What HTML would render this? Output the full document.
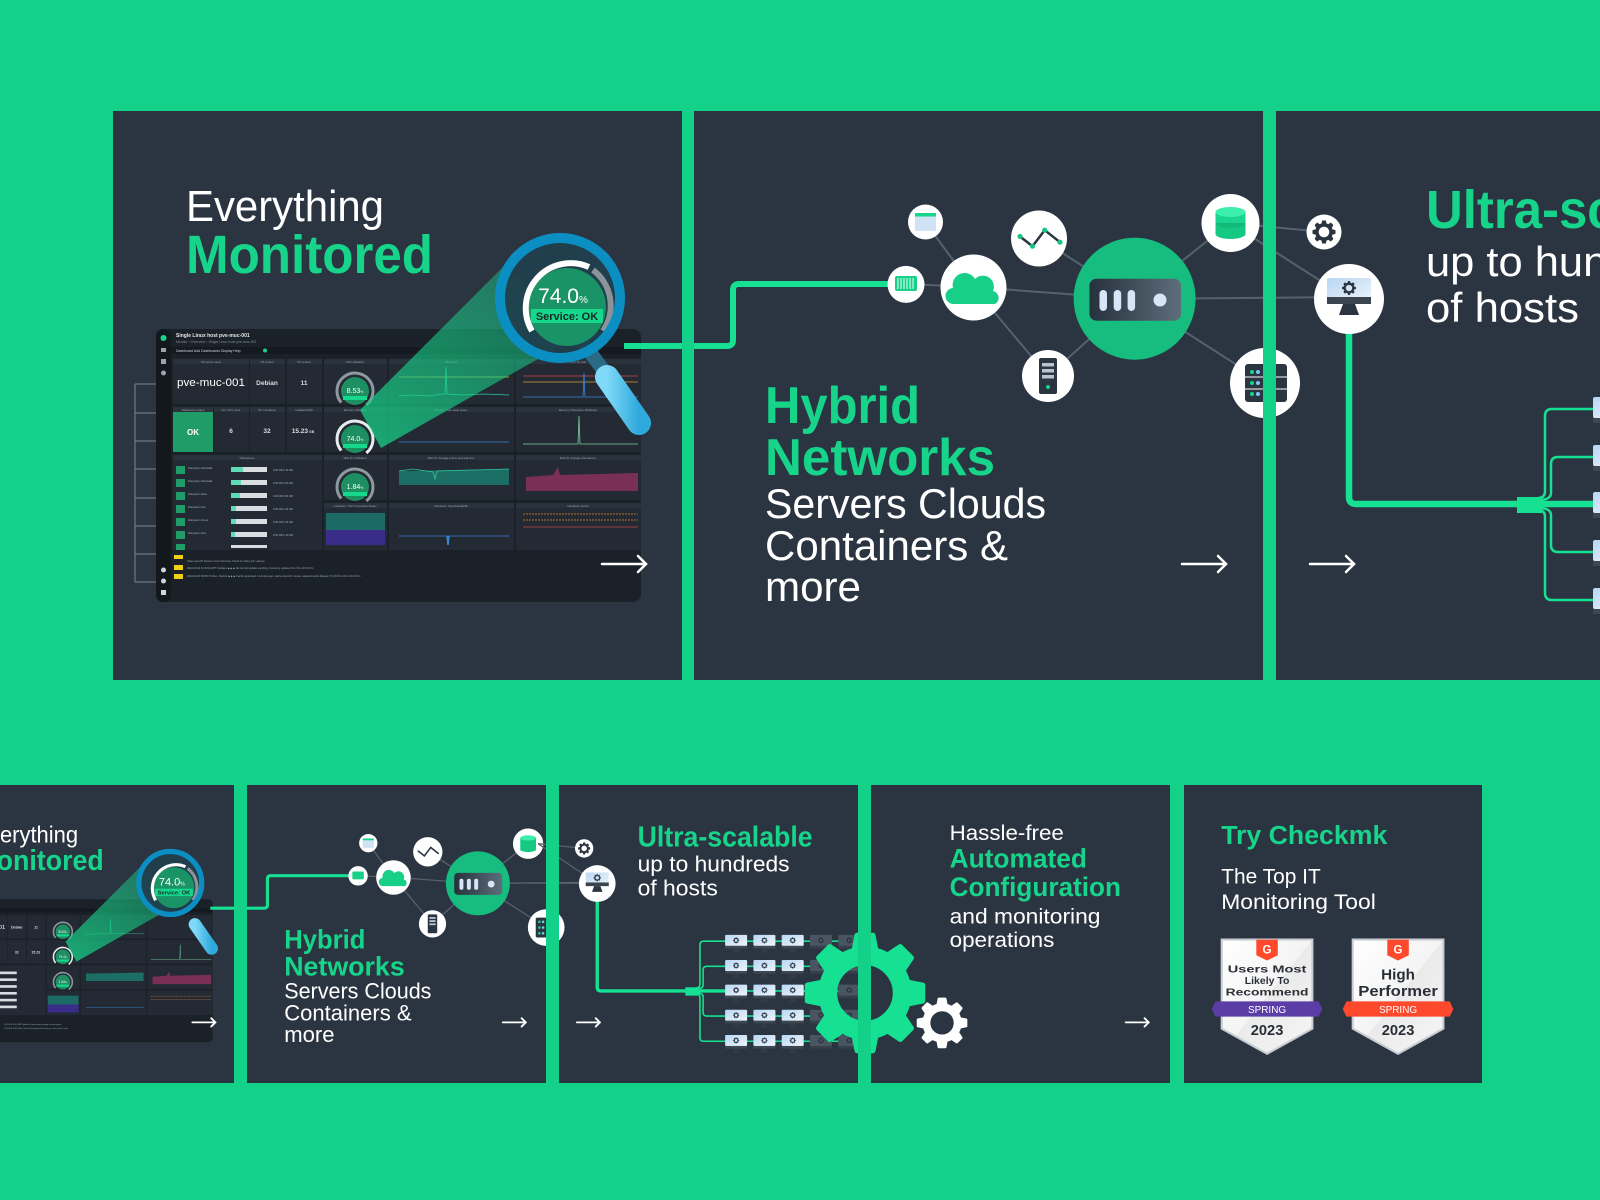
<!DOCTYPE html>
<html><head><meta charset="utf-8">
<style>
html,body{margin:0;padding:0;}
body{width:1600px;height:1200px;overflow:hidden;background:#14d18a;position:relative;font-family:"Liberation Sans",sans-serif;}
.bg{position:absolute;background:#2b3541;}
.pc{position:absolute;width:569px;height:569px;}
.pc svg{position:absolute;left:0;top:0;overflow:visible;}
.sm{transform:scale(0.524);transform-origin:0 0;}
.st{position:absolute;background:#14d18a;}
</style></head><body>
<svg width="0" height="0" style="position:absolute">
<defs>
<linearGradient id="cone" x1="0" y1="1" x2="1" y2="0"><stop offset="0" stop-color="#17d48b" stop-opacity="0.75"/><stop offset="1" stop-color="#17d48b" stop-opacity="0.35"/></linearGradient>
<linearGradient id="srv" x1="0" y1="0" x2="1" y2="0"><stop offset="0" stop-color="#26313c"/><stop offset="1" stop-color="#5d6e7b"/></linearGradient>
<linearGradient id="scr" x1="0" y1="0" x2="1" y2="1"><stop offset="0" stop-color="#b8d6f2"/><stop offset="1" stop-color="#eef5fc"/></linearGradient>
<linearGradient id="hdl" x1="0" y1="0" x2="1" y2="0"><stop offset="0" stop-color="#7fd9f8"/><stop offset="1" stop-color="#2fa9dc"/></linearGradient>
<linearGradient id="bdg" x1="0" y1="0" x2="1" y2="1"><stop offset="0" stop-color="#ffffff"/><stop offset="0.5" stop-color="#f4f4f4"/><stop offset="0.5" stop-color="#eaeaea"/><stop offset="1" stop-color="#f6f6f6"/></linearGradient>
<polygon id="tooth" points="-15,-110 15,-110 21,-80 -21,-80" stroke="currentColor" stroke-width="10" stroke-linejoin="round"/>
<g id="gear"><circle r="71" fill="none" stroke="currentColor" stroke-width="36"/>
<g fill="currentColor"><use href="#tooth"/><use href="#tooth" transform="rotate(45)"/><use href="#tooth" transform="rotate(90)"/><use href="#tooth" transform="rotate(135)"/><use href="#tooth" transform="rotate(180)"/><use href="#tooth" transform="rotate(225)"/><use href="#tooth" transform="rotate(270)"/><use href="#tooth" transform="rotate(315)"/></g></g>
<g id="host"><rect x="0" y="-12" width="42" height="21" rx="2" fill="url(#scr)"/><rect x="0" y="9" width="42" height="5" fill="#3c4752"/><polygon points="16,14 26,14 28,22 14,22" fill="#36414c" opacity="0.6"/><use href="#gear" transform="translate(21,-1.5) scale(0.05)" style="color:#2b3541"/></g>
<g id="hostd"><rect x="0" y="-12" width="42" height="21" rx="2" fill="#4a5562"/><rect x="0" y="9" width="42" height="5" fill="#36404b"/><use href="#gear" transform="translate(21,-1.5) scale(0.05)" style="color:#2b3541"/></g>
</defs></svg>

<!-- backgrounds -->
<div class="bg" style="left:113px;top:111px;width:569px;height:569px"></div>
<div class="bg" style="left:694px;top:111px;width:569px;height:569px"></div>
<div class="bg" style="left:1276px;top:111px;width:324px;height:569px"></div>
<div class="bg" style="left:0;top:785px;width:234px;height:298px"></div>
<div class="bg" style="left:247px;top:785px;width:299px;height:298px"></div>
<div class="bg" style="left:559px;top:785px;width:299px;height:298px"></div>
<div class="bg" style="left:871px;top:785px;width:299px;height:298px"></div>
<div class="bg" style="left:1184px;top:785px;width:298px;height:298px"></div>

<!-- PANEL 1 TOP -->
<div class="pc" style="left:113px;top:111px"><svg width="569" height="569">
<g stroke="#7d8893" stroke-width="1"><line x1="22" y1="273" x2="22" y2="471"/><line x1="22" y1="273" x2="43" y2="273"/><line x1="22" y1="302" x2="43" y2="302"/><line x1="22" y1="330" x2="43" y2="330"/><line x1="22" y1="358" x2="43" y2="358"/><line x1="22" y1="387" x2="43" y2="387"/><line x1="22" y1="415" x2="43" y2="415"/><line x1="22" y1="443" x2="43" y2="443"/><line x1="22" y1="471" x2="43" y2="471"/></g>
<text x="73" y="110" font-size="44" fill="#fff" textLength="198" lengthAdjust="spacingAndGlyphs">Everything</text>
<text x="73" y="162" font-size="54" font-weight="700" fill="#17d48b" textLength="247" lengthAdjust="spacingAndGlyphs">Monitored</text>
<rect x="43" y="218" width="485" height="273" rx="8" fill="#1b2128"/>
<rect x="43" y="218" width="15" height="273" rx="7" fill="#13181d"/>
<circle cx="50.5" cy="227" r="3" fill="#17d48b"/><rect x="48" y="237" width="5" height="4" fill="#9aa4ae"/><rect x="48" y="248" width="5" height="5" fill="#9aa4ae"/><circle cx="50.5" cy="262" r="2.5" fill="#9aa4ae"/><circle cx="50.5" cy="459" r="2.5" fill="#cfd6dc"/><circle cx="50.5" cy="470" r="2.5" fill="#cfd6dc"/><rect x="48" y="479" width="5" height="5" fill="#cfd6dc"/>
<text x="63" y="226" font-size="5" font-weight="700" fill="#e6e9ec">Single Linux host pve-muc-001</text>
<text x="63" y="232" font-size="3.5" fill="#7f8a95">Monitor › Overview › Single Linux host pve-muc-001</text>
<rect x="58" y="236" width="470" height="7" fill="#151a20"/>
<text x="63" y="241" font-size="3.5" fill="#d0d5da">Dashboard   Add   Dashboards   Display   Help</text><circle cx="152" cy="239.5" r="2" fill="#17d48b"/>
<g fill="#232a33">
<rect x="60" y="248" width="76" height="45"/><rect x="137" y="248" width="35" height="45"/><rect x="174" y="248" width="35" height="45"/><rect x="211" y="248" width="63" height="45"/><rect x="276" y="248" width="125" height="45"/><rect x="403" y="248" width="125" height="45"/>
<rect x="101" y="296" width="35" height="45"/><rect x="137" y="296" width="35" height="45"/><rect x="174" y="296" width="35" height="45"/><rect x="211" y="296" width="63" height="45"/><rect x="276" y="296" width="125" height="45"/><rect x="403" y="296" width="125" height="45"/>
<rect x="60" y="344" width="149" height="95"/><rect x="211" y="344" width="63" height="45"/><rect x="276" y="344" width="125" height="45"/><rect x="403" y="344" width="125" height="45"/>
<rect x="211" y="392" width="63" height="47"/><rect x="276" y="392" width="125" height="47"/><rect x="403" y="392" width="125" height="47"/>
</g>
<g fill="#2a323c"><rect x="60" y="248" width="76" height="5"/><rect x="137" y="248" width="35" height="5"/><rect x="174" y="248" width="35" height="5"/><rect x="211" y="248" width="63" height="5"/><rect x="276" y="248" width="125" height="5"/><rect x="403" y="248" width="125" height="5"/><rect x="60" y="296" width="40" height="5"/><rect x="101" y="296" width="35" height="5"/><rect x="137" y="296" width="35" height="5"/><rect x="174" y="296" width="35" height="5"/><rect x="211" y="296" width="63" height="5"/><rect x="276" y="296" width="125" height="5"/><rect x="403" y="296" width="125" height="5"/><rect x="60" y="344" width="149" height="5"/><rect x="211" y="344" width="63" height="5"/><rect x="276" y="344" width="125" height="5"/><rect x="403" y="344" width="125" height="5"/><rect x="211" y="392" width="63" height="5"/><rect x="276" y="392" width="125" height="5"/><rect x="403" y="392" width="125" height="5"/></g>
<g font-size="2.8" fill="#9aa4ae" text-anchor="middle"><text x="98" y="252">OS server name</text><text x="154" y="252">OS vendor</text><text x="191" y="252">OS version</text><text x="242" y="252">CPU utilization</text><text x="338" y="252">CPU load</text><text x="465" y="252">CPU I/O wait</text><text x="80" y="300">Datasource status</text><text x="118" y="300">No. CPU cores</text><text x="154" y="300">No. Interfaces</text><text x="191" y="300">Installed RAM</text><text x="242" y="300">Memory utilization</text><text x="338" y="300">Memory: Free swap space</text><text x="465" y="300">Memory: Filesystem Writeback</text><text x="134" y="348">Filesystems</text><text x="242" y="348">Disk IO: Utilization</text><text x="338" y="348">Disk IO: Average end to end wait time</text><text x="465" y="348">Disk IO: Average disk latency</text><text x="242" y="396">Interfaces: TCP Connection States</text><text x="338" y="396">Interfaces: Used bandwidth</text><text x="465" y="396">Interfaces: Errors</text></g>
<text x="98" y="275" font-size="11" fill="#fff" text-anchor="middle" textLength="68" lengthAdjust="spacingAndGlyphs">pve-muc-001</text>
<text x="154" y="274" font-size="6.5" font-weight="700" fill="#d8dde2" text-anchor="middle">Debian</text>
<text x="191" y="274" font-size="6.5" font-weight="700" fill="#d8dde2" text-anchor="middle">11</text>
<rect x="60" y="301" width="40" height="40" fill="#1f9c68"/><text x="80" y="324" font-size="8" font-weight="700" fill="#fff" text-anchor="middle">OK</text>
<text x="118" y="322" font-size="6.5" font-weight="700" fill="#d8dde2" text-anchor="middle">6</text>
<text x="154" y="322" font-size="6.5" font-weight="700" fill="#d8dde2" text-anchor="middle">32</text>
<text x="190" y="322" font-size="6.5" font-weight="700" fill="#d8dde2" text-anchor="middle">15.23<tspan font-size="3.5"> GB</tspan></text>
<g id="g1">
<circle cx="242" cy="280" r="18" fill="none" stroke="#8f989f" stroke-width="3" stroke-dasharray="85 200" transform="rotate(140 242 280)"/>
<circle cx="242" cy="280" r="14" fill="#1d8f61"/><text x="242" y="282" font-size="7" fill="#fff" text-anchor="middle">8.53<tspan font-size="3.5">%</tspan></text><rect x="230" y="285" width="24" height="4" fill="#16d88c"/>
<circle cx="242" cy="328" r="18" fill="none" stroke="#e8ecef" stroke-width="3" stroke-dasharray="85 200" transform="rotate(140 242 328)"/>
<circle cx="242" cy="328" r="14" fill="#1d8f61"/><text x="242" y="330" font-size="7" fill="#fff" text-anchor="middle">74.0<tspan font-size="3.5">%</tspan></text><rect x="230" y="333" width="24" height="4" fill="#16d88c"/>
<circle cx="242" cy="376" r="18" fill="none" stroke="#8f989f" stroke-width="3" stroke-dasharray="85 200" transform="rotate(140 242 376)"/>
<circle cx="242" cy="376" r="14" fill="#1d8f61"/><text x="242" y="378" font-size="7" fill="#fff" text-anchor="middle">1.84<tspan font-size="3.5">%</tspan></text><rect x="230" y="381" width="24" height="4" fill="#16d88c"/>
</g>
<g stroke-width="0.8" fill="none">
<line x1="286" y1="266" x2="396" y2="266" stroke="#c7c63a"/>
<polyline points="286,285 300,284 315,285 330,283 332,283 333,256 334,283 350,284 370,283 396,284" stroke="#2ec4a0"/>
<line x1="410" y1="265" x2="525" y2="265" stroke="#d04c4c"/><line x1="410" y1="271" x2="525" y2="271" stroke="#d9a13a"/><polyline points="410,286 470,286 471,262 472,286 525,286" stroke="#3a86d8"/>
<line x1="286" y1="331" x2="396" y2="331" stroke="#3a86d8"/>
<polyline points="410,333 465,333 466,305 467,333 525,333" stroke="#7ccf9c"/>
<line x1="286" y1="425" x2="396" y2="425" stroke="#3a86d8"/><polyline points="334,425 335,434 336,425" stroke="#3a86d8" stroke-width="1.5"/>
<line x1="410" y1="403" x2="525" y2="403" stroke="#e0882f" stroke-dasharray="2 1"/><line x1="410" y1="409" x2="525" y2="409" stroke="#e0882f" stroke-dasharray="2 1"/><line x1="410" y1="416" x2="525" y2="416" stroke="#c04848"/>
</g>
<polygon points="286,360 396,358 396,374 286,374" fill="#1d6f65"/><polyline points="286,360 300,358 320,361 322,368 324,360 396,358" stroke="#2ec4a0" fill="none" stroke-width="0.8"/>
<polygon points="413,366 440,364 445,356 447,364 525,362 525,380 413,380" fill="#7a2f55"/>
<rect x="213" y="402" width="59" height="17" fill="#1c6a66"/><rect x="213" y="419" width="59" height="15" fill="#3a2d8a"/>
<g fill="#d8dde2"><rect x="63" y="355" width="9" height="8" fill="#1f9c68"/><rect x="63" y="368" width="9" height="8" fill="#1f9c68"/><rect x="63" y="381" width="9" height="8" fill="#1f9c68"/><rect x="63" y="394" width="9" height="8" fill="#1f9c68"/><rect x="63" y="407" width="9" height="8" fill="#1f9c68"/><rect x="63" y="420" width="9" height="8" fill="#1f9c68"/><rect x="63" y="433" width="9" height="6" fill="#1f9c68"/>
<rect x="118" y="356" width="36" height="5"/><rect x="118" y="369" width="36" height="5"/><rect x="118" y="382" width="36" height="5"/><rect x="118" y="395" width="36" height="5"/><rect x="118" y="408" width="36" height="5"/><rect x="118" y="421" width="36" height="5"/><rect x="118" y="434" width="36" height="3"/></g>
<g fill="#5fdcb5"><rect x="118" y="356" width="12" height="5"/><rect x="118" y="369" width="10" height="5"/><rect x="118" y="382" width="9" height="5"/><rect x="118" y="395" width="5" height="5"/><rect x="118" y="408" width="5" height="5"/><rect x="118" y="421" width="4" height="5"/></g>
<g font-size="2.6" fill="#aab3bc"><text x="75" y="358">Filesystem /dev/sda1</text><text x="75" y="371">Filesystem /dev/sda2</text><text x="75" y="384">Filesystem /boot</text><text x="75" y="397">Filesystem /var</text><text x="75" y="410">Filesystem /home</text><text x="75" y="423">Filesystem /tmp</text><text x="160" y="360">0.00 GB   2.13 GB</text><text x="160" y="373">0.00 GB   2.00 GB</text><text x="160" y="386">0.00 GB   2.96 GB</text><text x="160" y="399">0.00 GB   1.32 GB</text><text x="160" y="412">0.00 GB   1.31 GB</text><text x="160" y="425">0.00 GB   1.10 GB</text></g>
<rect x="61" y="444" width="9" height="4" fill="#f2d017"/>
<rect x="61" y="454" width="9" height="5" fill="#f2d017"/><rect x="61" y="463" width="9" height="5" fill="#f2d017"/>
<g font-size="2.6" fill="#9aa4ae"><text x="74" y="451">State  Last OK   Service   Icons   Summary                                                        Check int.  Retry  Att.  Latency</text><text x="74" y="458">2022-03-04 11:30:19   APT Updates   ◆ ◆ ◆   No normal updates pending, 0 security updates                                   60 s   60 s  3/3  0.00 s</text><text x="74" y="466">2022-03-03 06:08:47   Mem, Recbuf   ◆ ◆ ◆   Cache generated 4 minutes ago, cache interval 1 minute, elapsed cache lifespan 76.3%   60 s   60 s  3/3  0.00 s</text></g>
<polygon points="247,299 390,156 476,219 268,337" fill="url(#cone)"/>
<line x1="529" y1="235" x2="600" y2="235" stroke="#16e092" stroke-width="5"/>
<line x1="470" y1="232" x2="500" y2="272" stroke="#2a6a87" stroke-width="14" stroke-linecap="round"/>
<line x1="494" y1="266" x2="526" y2="312" stroke="url(#hdl)" stroke-width="24" stroke-linecap="round"/>
<circle cx="447" cy="187" r="56" fill="#1f3f4d" opacity="0.92"/>
<circle cx="454" cy="196" r="39" fill="#1a9466"/>
<path d="M419 220 A45 45 0 0 1 476 156" fill="none" stroke="#fff" stroke-width="6"/>
<path d="M480 159 A45 45 0 0 1 490 220" fill="none" stroke="#8b9499" stroke-width="6"/>
<text x="450" y="192" font-size="21" fill="#fff" text-anchor="middle">74.0<tspan font-size="10">%</tspan></text>
<rect x="418" y="198" width="72" height="14" fill="#16d88c"/><text x="454" y="209" font-size="11" font-weight="700" fill="#142a22" text-anchor="middle">Service: OK</text>
<circle cx="447" cy="187" r="60" fill="none" stroke="#0b8fc3" stroke-width="10"/>
<g stroke="#fff" stroke-width="2.5" fill="none" stroke-linecap="round"><line x1="489" y1="453" x2="533" y2="453"/><polyline points="525,445 533,453 525,461"/></g>
</svg></div>

<!-- PANEL 2 TOP -->
<div class="pc" style="left:694px;top:111px"><svg width="569" height="569">
<path d="M-70 235 H33 Q39 235 39 229 V179 Q39 173 45 173 H200" stroke="#16e092" stroke-width="6" fill="none"/>
<g stroke="#55616d" stroke-width="2"><line x1="231" y1="111" x2="279" y2="176"/><line x1="212" y1="173" x2="279" y2="176"/><line x1="279" y1="176" x2="440" y2="188"/><line x1="345" y1="127" x2="440" y2="188"/><line x1="279" y1="176" x2="354" y2="265"/><line x1="354" y1="265" x2="440" y2="188"/><line x1="571" y1="272" x2="440" y2="188"/><line x1="536" y1="112" x2="440" y2="188"/><line x1="440" y1="188" x2="655" y2="186"/><line x1="536" y1="112" x2="630" y2="121"/><line x1="536" y1="112" x2="655" y2="188"/></g>
<circle cx="231.5" cy="111" r="17.5" fill="#fff"/><rect x="221" y="102" width="21" height="18" fill="#cfe3f5"/><rect x="221" y="102" width="21" height="3.5" fill="#17d48b"/>
<circle cx="345" cy="127.5" r="28" fill="#fff"/><polyline points="326,125.5 338.5,135.2 350.7,119.2 366,131.2" fill="none" stroke="#2b3541" stroke-width="2.5"/><g fill="#17c582"><circle cx="326" cy="125.5" r="2.6"/><circle cx="338.5" cy="135.2" r="2.6"/><circle cx="350.7" cy="119.2" r="2.6"/><circle cx="366" cy="131.2" r="2.6"/></g>
<circle cx="536.5" cy="112" r="29" fill="#fff"/><rect x="521.5" y="101" width="30" height="22" fill="#15c983"/><ellipse cx="536.5" cy="123" rx="15" ry="5" fill="#15c983"/><ellipse cx="536.5" cy="112" rx="15" ry="5" fill="#13b978"/><rect x="521.5" y="101" width="30" height="11" fill="#1bd48e"/><ellipse cx="536.5" cy="101" rx="15" ry="5" fill="#3cefad"/>
<circle cx="440.6" cy="187.7" r="61" fill="#16bd7e"/><rect x="395.5" y="167.7" width="91.5" height="42" rx="7" fill="url(#srv)"/><g fill="#d6e6f7"><rect x="405.5" y="179" width="7.5" height="21" rx="3.7"/><rect x="419.7" y="179" width="7.5" height="21" rx="3.7"/><rect x="433.6" y="179" width="7.5" height="21" rx="3.7"/><circle cx="466" cy="189" r="6.5"/></g>
<circle cx="279.5" cy="176.5" r="33" fill="#fff"/><path d="M260 193 A8 8 0 0 1 259 177 A12 12 0 0 1 281 168 A11 11 0 0 1 299 180 A7 7 0 0 1 301 193 Z" fill="#17cf87"/>
<circle cx="212" cy="173.4" r="18.5" fill="#fff"/><rect x="201" y="165" width="22" height="15" rx="2" fill="#18d08a"/><g stroke="#e8fff5" stroke-width="1"><line x1="204" y1="167" x2="204" y2="178"/><line x1="207" y1="167" x2="207" y2="178"/><line x1="210" y1="167" x2="210" y2="178"/><line x1="213" y1="167" x2="213" y2="178"/><line x1="216" y1="167" x2="216" y2="178"/><line x1="219" y1="167" x2="219" y2="178"/></g>
<circle cx="354" cy="265" r="26" fill="#fff"/><rect x="345" y="247" width="18" height="36" rx="2" fill="#2b3541"/><g fill="#b9c3cd"><rect x="348" y="252" width="12" height="3.5"/><rect x="348" y="258" width="12" height="3.5"/><rect x="348" y="264" width="12" height="3.5"/></g><circle cx="354" cy="276" r="2" fill="#17d48b"/>
<circle cx="571" cy="272" r="35" fill="#fff"/><rect x="551" y="253" width="42" height="38" rx="3" fill="#2b3541"/><g fill="#17d48b"><circle cx="558" cy="261" r="2"/><circle cx="558" cy="272" r="2"/><circle cx="558" cy="283" r="2"/></g><g fill="#7cc6f2"><circle cx="564" cy="261" r="2"/><circle cx="564" cy="272" r="2"/><circle cx="564" cy="283" r="2"/></g><g stroke="#fff" stroke-width="1"><line x1="551" y1="266" x2="593" y2="266"/><line x1="551" y1="278" x2="593" y2="278"/></g>
<text x="71" y="312" font-size="52" font-weight="700" fill="#17d48b" textLength="155" lengthAdjust="spacingAndGlyphs">Hybrid</text>
<text x="71" y="364" font-size="52" font-weight="700" fill="#17d48b" textLength="230" lengthAdjust="spacingAndGlyphs">Networks</text>
<text x="71" y="407" font-size="42" fill="#fff" textLength="281" lengthAdjust="spacingAndGlyphs">Servers Clouds</text>
<text x="71" y="449" font-size="42" fill="#fff" textLength="243" lengthAdjust="spacingAndGlyphs">Containers &amp;</text>
<text x="71" y="490" font-size="42" fill="#fff" textLength="96" lengthAdjust="spacingAndGlyphs">more</text>
<g stroke="#fff" stroke-width="2.5" fill="none" stroke-linecap="round"><line x1="488" y1="453" x2="532" y2="453"/><polyline points="524,445 532,453 524,461"/></g>
</svg></div>

<!-- PANEL 3 TOP (clipped) -->
<div class="pc" style="left:1276px;top:111px;width:324px;overflow:hidden"><svg width="324" height="569" viewBox="0 0 324 569" style="overflow:hidden">
<circle cx="48" cy="121" r="17.5" fill="#fff"/><use href="#gear" transform="translate(48,121) scale(0.1)" style="color:#2b3541"/>
<path d="M73 222 V386 Q73 393 80 393 H245" stroke="#16e092" stroke-width="6.5" fill="none"/>
<rect x="241" y="386" width="25" height="16" fill="#16e092"/>
<g stroke="#16e092" stroke-width="2.5" fill="none"><path d="M262 387 Q269 387 269 380 V305 Q269 298 276 298 H317"/><path d="M262 389 Q275 389 275 382 V353 Q275 346 282 346 H317"/><line x1="262" y1="393" x2="317" y2="393" stroke-width="6.5"/><path d="M262 397 Q275 397 275 404 V434 Q275 441 282 441 H317"/><path d="M262 399 Q269 399 269 406 V482 Q269 489 276 489 H317"/></g>
<use href="#host" x="317" y="298"/><use href="#host" x="317" y="346"/><use href="#host" x="317" y="393"/><use href="#host" x="317" y="441"/><use href="#host" x="317" y="489"/>
<circle cx="73" cy="188" r="35" fill="#fff"/><rect x="51" y="167" width="44" height="24" rx="2" fill="url(#scr)"/><rect x="51" y="186" width="44" height="7" fill="#3a4550"/><polygon points="67,193 79,193 83,204 63,204" fill="#2b3541"/><use href="#gear" transform="translate(73,177) scale(0.06)" style="color:#2b3541"/>
<text x="150" y="117" font-size="54" font-weight="700" fill="#17d48b" textLength="334" lengthAdjust="spacingAndGlyphs">Ultra-scalable</text>
<text x="150" y="165" font-size="42" fill="#fff" textLength="290" lengthAdjust="spacingAndGlyphs">up to hundreds</text>
<text x="150" y="211" font-size="42" fill="#fff" textLength="153" lengthAdjust="spacingAndGlyphs">of hosts</text>
<g stroke="#fff" stroke-width="2.5" fill="none" stroke-linecap="round"><line x1="34" y1="453" x2="78" y2="453"/><polyline points="70,445 78,453 70,461"/></g>
</svg></div>

<!-- BOTTOM PANEL 1 (clipped via viewBox) -->
<div class="pc sm" style="left:0;top:785px;width:471px"><svg width="471" height="569" viewBox="122 0 471 569" style="overflow:hidden">
<text x="73" y="110" font-size="44" fill="#fff" textLength="198" lengthAdjust="spacingAndGlyphs">Everything</text>
<text x="73" y="162" font-size="54" font-weight="700" fill="#17d48b" textLength="247" lengthAdjust="spacingAndGlyphs">Monitored</text>
<rect x="43" y="218" width="485" height="273" rx="8" fill="#1b2128"/>
<rect x="58" y="236" width="470" height="7" fill="#151a20"/>
<g fill="#232a33">
<rect x="60" y="248" width="76" height="45"/><rect x="137" y="248" width="35" height="45"/><rect x="174" y="248" width="35" height="45"/><rect x="211" y="248" width="63" height="45"/><rect x="276" y="248" width="125" height="45"/><rect x="403" y="248" width="125" height="45"/>
<rect x="101" y="296" width="35" height="45"/><rect x="137" y="296" width="35" height="45"/><rect x="174" y="296" width="35" height="45"/><rect x="211" y="296" width="63" height="45"/><rect x="276" y="296" width="125" height="45"/><rect x="403" y="296" width="125" height="45"/>
<rect x="60" y="344" width="149" height="95"/><rect x="211" y="344" width="63" height="45"/><rect x="276" y="344" width="125" height="45"/><rect x="403" y="344" width="125" height="45"/>
<rect x="211" y="392" width="63" height="47"/><rect x="276" y="392" width="125" height="47"/><rect x="403" y="392" width="125" height="47"/>
</g>
<text x="98" y="275" font-size="11" fill="#fff" text-anchor="middle" textLength="68" lengthAdjust="spacingAndGlyphs">pve-muc-001</text>
<text x="154" y="274" font-size="6.5" font-weight="700" fill="#d8dde2" text-anchor="middle">Debian</text>
<text x="191" y="274" font-size="6.5" font-weight="700" fill="#d8dde2" text-anchor="middle">11</text>
<rect x="60" y="301" width="40" height="40" fill="#1f9c68"/>
<text x="154" y="322" font-size="6.5" font-weight="700" fill="#d8dde2" text-anchor="middle">32</text>
<text x="190" y="322" font-size="6.5" font-weight="700" fill="#d8dde2" text-anchor="middle">15.23</text>
<use href="#g1"/>
<g stroke-width="0.8" fill="none"><polyline points="286,285 330,283 332,283 333,256 334,283 396,284" stroke="#2ec4a0"/><polyline points="410,333 465,333 466,305 467,333 525,333" stroke="#7ccf9c"/><line x1="410" y1="403" x2="525" y2="403" stroke="#e0882f" stroke-dasharray="2 1"/><line x1="410" y1="409" x2="525" y2="409" stroke="#e0882f" stroke-dasharray="2 1"/><line x1="286" y1="425" x2="396" y2="425" stroke="#3a86d8"/></g>
<polygon points="286,360 396,358 396,374 286,374" fill="#1d6f65"/><polygon points="413,366 440,364 445,356 447,364 525,362 525,380 413,380" fill="#7a2f55"/>
<rect x="213" y="402" width="59" height="17" fill="#1c6a66"/><rect x="213" y="419" width="59" height="15" fill="#3a2d8a"/>
<g fill="#d8dde2"><rect x="118" y="356" width="36" height="5"/><rect x="118" y="369" width="36" height="5"/><rect x="118" y="382" width="36" height="5"/><rect x="118" y="395" width="36" height="5"/><rect x="118" y="408" width="36" height="5"/><rect x="118" y="421" width="36" height="5"/></g>
<g font-size="3" fill="#9aa4ae"><text x="130" y="458">2022-03-04 11:30:19   APT Updates   No normal updates pending, 0 security updates</text><text x="130" y="466">2022-03-03 06:08:47   Mem, Recbuf   Cache generated 4 minutes ago, cache interval 1 minute</text></g>
<polygon points="247,299 390,156 476,219 268,337" fill="url(#cone)"/>
<line x1="529" y1="235" x2="600" y2="235" stroke="#16e092" stroke-width="5"/>
<line x1="494" y1="266" x2="526" y2="312" stroke="url(#hdl)" stroke-width="24" stroke-linecap="round"/>
<circle cx="447" cy="187" r="56" fill="#1f3f4d" opacity="0.92"/>
<circle cx="454" cy="196" r="39" fill="#1a9466"/>
<path d="M419 220 A45 45 0 0 1 476 156" fill="none" stroke="#fff" stroke-width="6"/>
<path d="M480 159 A45 45 0 0 1 490 220" fill="none" stroke="#8b9499" stroke-width="6"/>
<text x="450" y="192" font-size="21" fill="#fff" text-anchor="middle">74.0<tspan font-size="10">%</tspan></text>
<rect x="418" y="198" width="72" height="14" fill="#16d88c"/><text x="454" y="209" font-size="11" font-weight="700" fill="#142a22" text-anchor="middle">Service: OK</text>
<circle cx="447" cy="187" r="60" fill="none" stroke="#0b8fc3" stroke-width="10"/>
<g stroke="#fff" stroke-width="3.5" fill="none" stroke-linecap="round"><line x1="489" y1="453" x2="533" y2="453"/><polyline points="525,445 533,453 525,461"/></g>
</svg></div>

<!-- BOTTOM PANEL 2 -->
<div class="pc sm" style="left:247px;top:785px"><svg width="569" height="569">
<path d="M-70 235 H33 Q39 235 39 229 V179 Q39 173 45 173 H200" stroke="#16e092" stroke-width="6" fill="none"/>
<g stroke="#55616d" stroke-width="2.5"><line x1="231" y1="111" x2="279" y2="176"/><line x1="212" y1="173" x2="279" y2="176"/><line x1="279" y1="176" x2="440" y2="188"/><line x1="345" y1="127" x2="440" y2="188"/><line x1="279" y1="176" x2="354" y2="265"/><line x1="354" y1="265" x2="440" y2="188"/><line x1="571" y1="272" x2="440" y2="188"/><line x1="536" y1="112" x2="440" y2="188"/><line x1="440" y1="188" x2="640" y2="186"/></g>
<circle cx="231.5" cy="111" r="17.5" fill="#fff"/><rect x="221" y="102" width="21" height="18" fill="#cfe3f5"/><rect x="221" y="102" width="21" height="3.5" fill="#17d48b"/>
<circle cx="345" cy="127.5" r="28" fill="#fff"/><polyline points="326,125.5 338.5,135.2 350.7,119.2 366,131.2" fill="none" stroke="#2b3541" stroke-width="3"/>
<circle cx="536.5" cy="112" r="29" fill="#fff"/><rect x="521.5" y="101" width="30" height="22" fill="#15c983"/><ellipse cx="536.5" cy="123" rx="15" ry="5" fill="#15c983"/><ellipse cx="536.5" cy="101" rx="15" ry="5" fill="#3cefad"/>
<circle cx="440.6" cy="187.7" r="61" fill="#16bd7e"/><rect x="395.5" y="167.7" width="91.5" height="42" rx="7" fill="url(#srv)"/><g fill="#d6e6f7"><rect x="405.5" y="179" width="7.5" height="21" rx="3.7"/><rect x="419.7" y="179" width="7.5" height="21" rx="3.7"/><rect x="433.6" y="179" width="7.5" height="21" rx="3.7"/><circle cx="466" cy="189" r="6.5"/></g>
<circle cx="279.5" cy="176.5" r="33" fill="#fff"/><path d="M260 193 A8 8 0 0 1 259 177 A12 12 0 0 1 281 168 A11 11 0 0 1 299 180 A7 7 0 0 1 301 193 Z" fill="#17cf87"/>
<circle cx="212" cy="173.4" r="18.5" fill="#fff"/><rect x="201" y="165" width="22" height="15" rx="2" fill="#18d08a"/>
<circle cx="354" cy="265" r="26" fill="#fff"/><rect x="345" y="247" width="18" height="36" rx="2" fill="#2b3541"/><g fill="#b9c3cd"><rect x="348" y="252" width="12" height="3.5"/><rect x="348" y="258" width="12" height="3.5"/><rect x="348" y="264" width="12" height="3.5"/></g>
<circle cx="571" cy="272" r="35" fill="#fff"/><rect x="551" y="253" width="42" height="38" rx="3" fill="#2b3541"/><g fill="#17d48b"><circle cx="558" cy="261" r="2.5"/><circle cx="558" cy="272" r="2.5"/><circle cx="558" cy="283" r="2.5"/></g><g fill="#7cc6f2"><circle cx="565" cy="261" r="2.5"/><circle cx="565" cy="272" r="2.5"/><circle cx="565" cy="283" r="2.5"/></g>
<text x="71" y="312" font-size="52" font-weight="700" fill="#17d48b" textLength="155" lengthAdjust="spacingAndGlyphs">Hybrid</text>
<text x="71" y="364" font-size="52" font-weight="700" fill="#17d48b" textLength="230" lengthAdjust="spacingAndGlyphs">Networks</text>
<text x="71" y="407" font-size="42" fill="#fff" textLength="281" lengthAdjust="spacingAndGlyphs">Servers Clouds</text>
<text x="71" y="449" font-size="42" fill="#fff" textLength="243" lengthAdjust="spacingAndGlyphs">Containers &amp;</text>
<text x="71" y="490" font-size="42" fill="#fff" textLength="96" lengthAdjust="spacingAndGlyphs">more</text>
<g stroke="#fff" stroke-width="3.5" fill="none" stroke-linecap="round"><line x1="488" y1="453" x2="532" y2="453"/><polyline points="524,445 532,453 524,461"/></g>
</svg></div>

<!-- BOTTOM PANEL 3 -->
<div class="pc sm" style="left:559px;top:785px"><svg width="569" height="569">
<g stroke="#55616d" stroke-width="2.5"><line x1="-40" y1="112" x2="48" y2="121"/><line x1="-40" y1="112" x2="73" y2="188"/><line x1="-60" y1="187" x2="73" y2="188"/></g>
<circle cx="48" cy="121" r="17.5" fill="#fff"/><use href="#gear" transform="translate(48,121) scale(0.1)" style="color:#2b3541"/>
<path d="M73 222 V386 Q73 393 80 393 H245" stroke="#16e092" stroke-width="6.5" fill="none"/>
<rect x="241" y="386" width="25" height="16" fill="#16e092"/>
<g stroke="#16e092" stroke-width="3" fill="none"><path d="M262 387 Q269 387 269 380 V305 Q269 298 276 298 H317"/><path d="M262 389 Q275 389 275 382 V353 Q275 346 282 346 H317"/><line x1="262" y1="393" x2="317" y2="393" stroke-width="6.5"/><path d="M262 397 Q275 397 275 404 V434 Q275 441 282 441 H317"/><path d="M262 399 Q269 399 269 406 V482 Q269 489 276 489 H317"/>
<line x1="317" y1="298" x2="560" y2="298"/><line x1="317" y1="346" x2="560" y2="346"/><line x1="317" y1="393" x2="560" y2="393"/><line x1="317" y1="441" x2="560" y2="441"/><line x1="317" y1="489" x2="560" y2="489"/></g>
<use href="#host" x="317" y="298"/><use href="#host" x="371" y="298"/><use href="#host" x="425" y="298"/><use href="#hostd" x="479" y="298"/><use href="#hostd" x="533" y="298"/>
<use href="#host" x="317" y="346"/><use href="#host" x="371" y="346"/><use href="#host" x="425" y="346"/><use href="#hostd" x="479" y="346"/><use href="#hostd" x="533" y="346"/>
<use href="#host" x="317" y="393"/><use href="#host" x="371" y="393"/><use href="#host" x="425" y="393"/><use href="#hostd" x="479" y="393"/><use href="#hostd" x="533" y="393"/>
<use href="#host" x="317" y="441"/><use href="#host" x="371" y="441"/><use href="#host" x="425" y="441"/><use href="#hostd" x="479" y="441"/><use href="#hostd" x="533" y="441"/>
<use href="#host" x="317" y="489"/><use href="#host" x="371" y="489"/><use href="#host" x="425" y="489"/><use href="#hostd" x="479" y="489"/><use href="#hostd" x="533" y="489"/>
<use href="#gear" transform="translate(584,397)" style="color:#16e092"/>
<use href="#gear" transform="translate(731,454) scale(0.42)" style="color:#ffffff"/>
<circle cx="73" cy="188" r="35" fill="#fff"/><rect x="51" y="167" width="44" height="24" rx="2" fill="url(#scr)"/><rect x="51" y="186" width="44" height="7" fill="#3a4550"/><polygon points="67,193 79,193 83,204 63,204" fill="#2b3541"/><use href="#gear" transform="translate(73,177) scale(0.06)" style="color:#2b3541"/>
<text x="150" y="117" font-size="54" font-weight="700" fill="#17d48b" textLength="334" lengthAdjust="spacingAndGlyphs">Ultra-scalable</text>
<text x="150" y="165" font-size="42" fill="#fff" textLength="290" lengthAdjust="spacingAndGlyphs">up to hundreds</text>
<text x="150" y="211" font-size="42" fill="#fff" textLength="153" lengthAdjust="spacingAndGlyphs">of hosts</text>
<g stroke="#fff" stroke-width="3.5" fill="none" stroke-linecap="round"><line x1="34" y1="453" x2="78" y2="453"/><polyline points="70,445 78,453 70,461"/></g>
</svg></div>

<!-- BOTTOM PANEL 4 -->
<div class="pc sm" style="left:871px;top:785px"><svg width="569" height="569">
<text x="150" y="105" font-size="40" fill="#fff" textLength="218" lengthAdjust="spacingAndGlyphs">Hassle-free</text>
<text x="150" y="157" font-size="52" font-weight="700" fill="#17d48b" textLength="262" lengthAdjust="spacingAndGlyphs">Automated</text>
<text x="150" y="212" font-size="52" font-weight="700" fill="#17d48b" textLength="327" lengthAdjust="spacingAndGlyphs">Configuration</text>
<text x="150" y="264" font-size="40" fill="#fff" textLength="288" lengthAdjust="spacingAndGlyphs">and monitoring</text>
<text x="150" y="309" font-size="40" fill="#fff" textLength="200" lengthAdjust="spacingAndGlyphs">operations</text>
<g stroke="#fff" stroke-width="3.5" fill="none" stroke-linecap="round"><line x1="486" y1="453" x2="530" y2="453"/><polyline points="522,445 530,453 522,461"/></g>
</svg></div>

<!-- BOTTOM PANEL 5 -->
<div class="pc sm" style="left:1184px;top:785px"><svg width="569" height="569">
<text x="71" y="113" font-size="50" font-weight="700" fill="#17d48b" textLength="317" lengthAdjust="spacingAndGlyphs">Try Checkmk</text>
<text x="71" y="188" font-size="40" fill="#fff" textLength="190" lengthAdjust="spacingAndGlyphs">The Top IT</text>
<text x="71" y="237" font-size="40" fill="#fff" textLength="295" lengthAdjust="spacingAndGlyphs">Monitoring Tool</text>
<g transform="translate(72,295)">
<polygon points="0,0 173,0 173,170 86.5,218 0,170" fill="url(#bdg)" stroke="#c9cdd2" stroke-width="4"/>
<path d="M66 0 H107 V30 L86.5 40 L66 30 Z" fill="#ff492c"/><text x="86.5" y="27" font-size="22" font-weight="700" fill="#fff" text-anchor="middle">G</text>
<g font-size="20" font-weight="700" fill="#2a2f36" text-anchor="middle"><text x="86.5" y="63" textLength="150" lengthAdjust="spacingAndGlyphs">Users Most</text><text x="86.5" y="85">Likely To</text><text x="86.5" y="107" textLength="158" lengthAdjust="spacingAndGlyphs">Recommend</text></g>
<polygon points="-12,118 185,118 192,132.5 185,147 -12,147 -19,132.5" fill="#5b3ea5"/>
<text x="86.5" y="140" font-size="19" fill="#fff" text-anchor="middle">SPRING</text>
<text x="86.5" y="182" font-size="28" font-weight="700" fill="#2a2f36" text-anchor="middle">2023</text>
</g>
<g transform="translate(322,295)">
<polygon points="0,0 173,0 173,170 86.5,218 0,170" fill="url(#bdg)" stroke="#c9cdd2" stroke-width="4"/>
<path d="M66 0 H107 V30 L86.5 40 L66 30 Z" fill="#ff492c"/><text x="86.5" y="27" font-size="22" font-weight="700" fill="#fff" text-anchor="middle">G</text>
<g font-size="29" font-weight="700" fill="#2a2f36" text-anchor="middle"><text x="86.5" y="76">High</text><text x="86.5" y="108" textLength="152" lengthAdjust="spacingAndGlyphs">Performer</text></g>
<polygon points="-12,118 185,118 192,132.5 185,147 -12,147 -19,132.5" fill="#ff492c"/>
<text x="86.5" y="140" font-size="19" fill="#fff" text-anchor="middle">SPRING</text>
<text x="86.5" y="182" font-size="28" font-weight="700" fill="#2a2f36" text-anchor="middle">2023</text>
</g>
</svg></div>

<!-- strips on top -->
<div class="st" style="left:682px;top:100px;width:12px;height:590px"></div>
<div class="st" style="left:1263px;top:100px;width:13px;height:590px"></div>
<div class="st" style="left:0;top:0;width:1600px;height:111px"></div>
<div class="st" style="left:0;top:680px;width:1600px;height:105px"></div>
<div class="st" style="left:0;top:1083px;width:1600px;height:117px"></div>
<div class="st" style="left:234px;top:775px;width:13px;height:320px"></div>
<div class="st" style="left:546px;top:775px;width:13px;height:320px"></div>
<div class="st" style="left:858px;top:775px;width:13px;height:320px"></div>
<div class="st" style="left:1170px;top:775px;width:14px;height:320px"></div>
<div class="st" style="left:1482px;top:775px;width:118px;height:320px"></div>
<div class="st" style="left:0;top:100px;width:113px;height:590px"></div>
</body></html>
